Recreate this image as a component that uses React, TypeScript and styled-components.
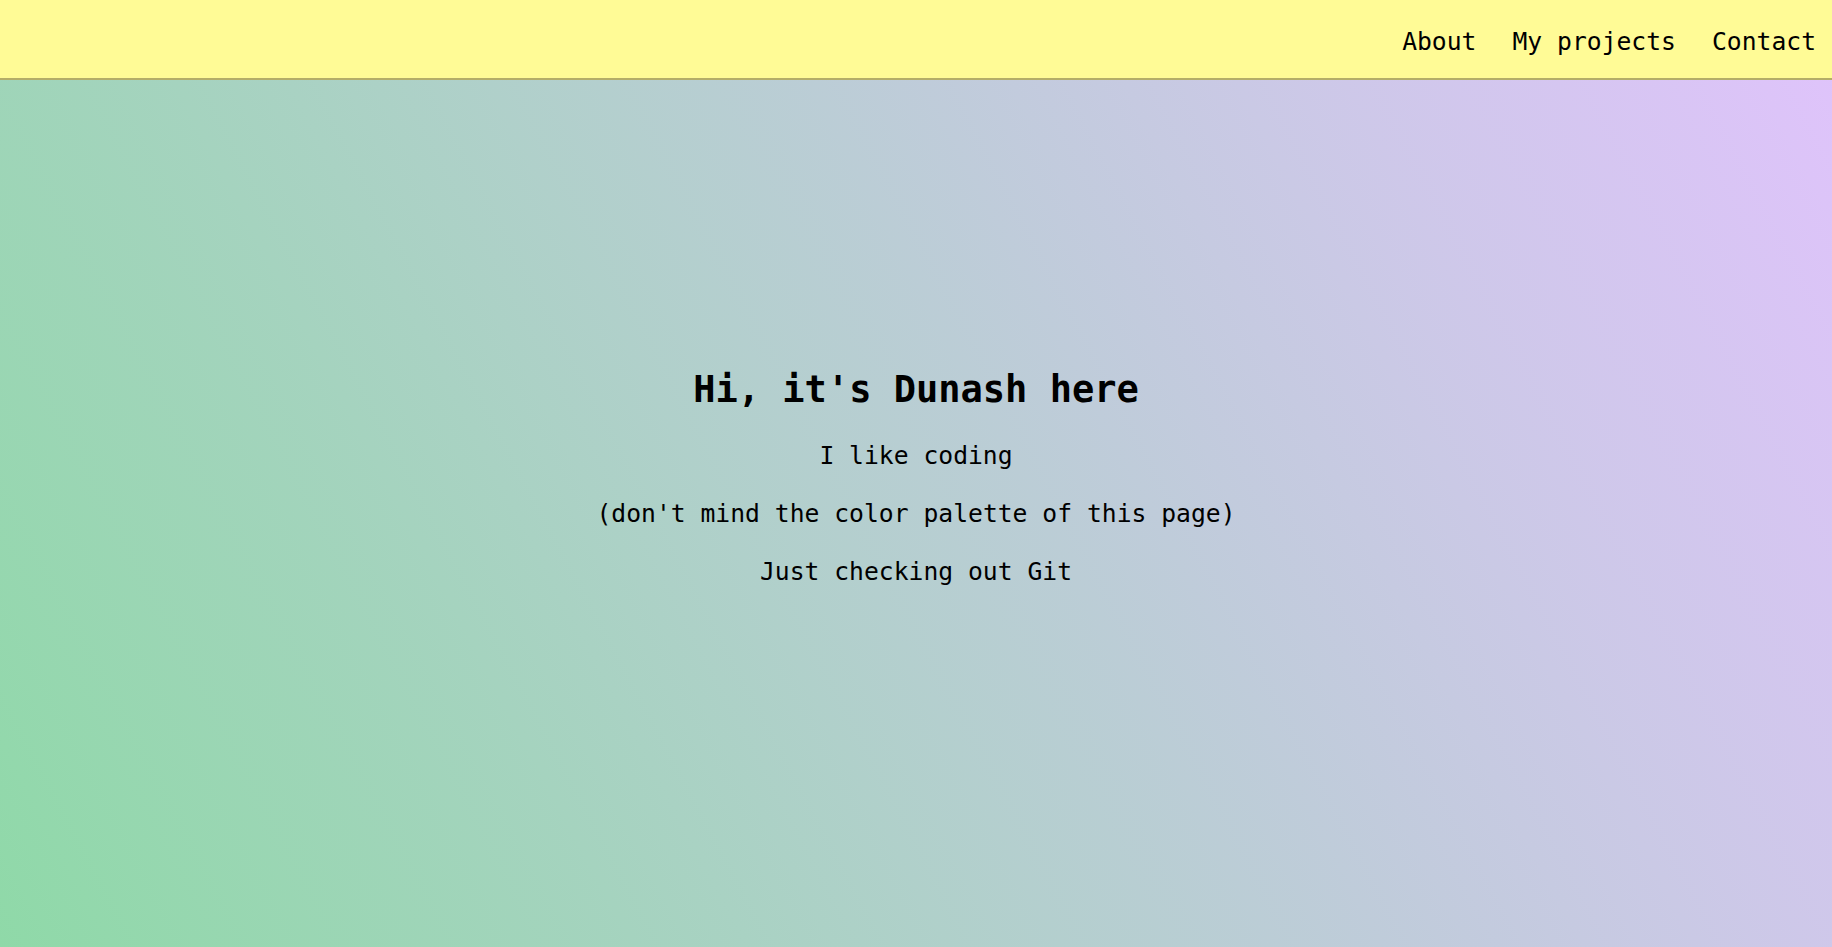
import React from "react";
import styled, { createGlobalStyle } from "styled-components";

const GlobalStyle = createGlobalStyle`
  html, body {
    margin: 0;
    padding: 0;
    height: 100%;
  }
  body {
    font-family: "DejaVu Sans Mono", "Liberation Mono", monospace;
    color: #000;
  }
  #root {
    min-height: 100%;
  }
`;

const Page = styled.div`
  display: flex;
  flex-direction: column;
  min-height: 100vh;
  background: linear-gradient(62deg, #8fd9a8 0%, #e0c3fc 100%);
`;

const Header = styled.header`
  display: flex;
  justify-content: flex-end;
  align-items: center;
  box-sizing: border-box;
  height: 80px;
  padding: 7px 16px 2px 16px;
  background: #fffb96;
  border-bottom: 2px solid #b4ad68;
`;

const Nav = styled.nav`
  display: flex;
  gap: 36px;
`;

const NavLink = styled.a`
  font-size: 24.7px;
  line-height: 30px;
  color: #000;
  text-decoration: none;
  cursor: pointer;
`;

const Main = styled.main`
  flex: 1;
  display: flex;
  flex-direction: column;
  align-items: center;
  gap: 28px;
  padding-top: 288px;
  text-align: center;
`;

const Title = styled.h1`
  margin: 0 0 1px;
  font-size: 37px;
  line-height: 44px;
  font-weight: 700;
`;

const Line = styled.p`
  margin: 0;
  font-size: 24.7px;
  line-height: 30px;
`;

const links = ["About", "My projects", "Contact"];

const lines = [
  "I like coding",
  "(don't mind the color palette of this page)",
  "Just checking out Git",
];

const App: React.FC = () => {
  return (
    <Page>
      <GlobalStyle />
      <Header>
        <Nav>
          {links.map(link => (
            <NavLink key={link}>{link}</NavLink>
          ))}
        </Nav>
      </Header>
      <Main>
        <Title>Hi, it's Dunash here</Title>
        {lines.map(line => (
          <Line key={line}>{line}</Line>
        ))}
      </Main>
    </Page>
  );
};

export default App;
